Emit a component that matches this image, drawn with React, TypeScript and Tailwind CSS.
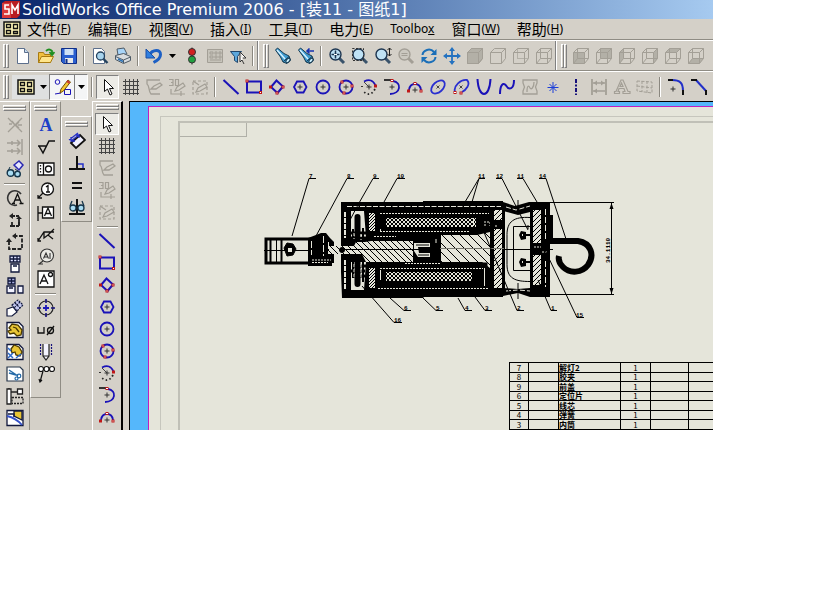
import React from 'react';
import clsx from 'clsx';

const BLUE = '#1a12b8';
const RED = '#c01818';
const GRAY = '#a39f96';
const INK = '#111111';
const PAPER = '#e5e5da';

interface IconProps {
  children: React.ReactNode;
  stroke?: string;
  width?: number;
}

const Icon: React.FC<IconProps> = ({ children, stroke = INK, width = 1 }) => (
  <svg
    viewBox="0 0 18 18"
    className="h-[18px] w-[18px] shrink-0"
    fill="none"
    stroke={stroke}
    strokeWidth={width}
    aria-hidden="true"
  >
    {children}
  </svg>
);

// little red handles used by the sketch tools
const Dots: React.FC<{ at: number[][] }> = ({ at }) => (
  <>
    {at.map(([x, y]) => (
      <rect key={`${x}-${y}`} x={x - 1} y={y - 1} width="2" height="2" fill="#fff" stroke={RED} strokeWidth="1" />
    ))}
  </>
);

const Plus: React.FC<{ x?: number; y?: number }> = ({ x = 9, y = 9 }) => (
  <path d={`M${x - 2.5} ${y}h5M${x} ${y - 2.5}v5`} stroke="#333" strokeWidth="1" />
);

const Cube: React.FC<{ face?: string; inner?: boolean; solid?: boolean }> = ({ face, inner, solid }) => (
  <Icon stroke={GRAY}>
    {solid && <path d="M1.500 5.500l4-4h11v10l-4 5h-11z" fill="#b3b0a7" />}
    {face && <path d={face} fill="#b3b0a7" stroke="none" />}
    <path d="M1.500 5.500h11v11h-11zM1.500 5.500l4-4h11v10l-4 5M12.500 5.500l4-4" />
    {inner && <path d="M5.500 1.500v10h11M5.500 11.500l-4 5" />}
  </Icon>
);

const Lens: React.FC<{ gray?: boolean; children?: React.ReactNode }> = ({ gray, children }) => (
  <Icon stroke={gray ? GRAY : '#1d3550'}>
    <path d="M11 11l5 5" strokeWidth="3" stroke={gray ? GRAY : '#39536b'} />
    <circle cx="7.500" cy="7.500" r="5.500" fill={gray ? '#cbc8c0' : '#bfe2f5'} strokeWidth="1.400" />
    {children}
  </Icon>
);

const Flashlight: React.FC<{ arrow?: boolean }> = ({ arrow }) => (
  <Icon stroke="#16384f">
    <path d="M1.500 3l2-2 6.500 5.500 5 2.500 1.500 4-3.500 3.500-4-1.500-2.500-5z" fill="#3f9bd0" />
    <path d="M3 3l8 9" stroke="#d8f2ff" strokeWidth="1.500" />
    <path d="M9.500 14.500l5.500-5" />
    <ellipse cx="14" cy="13.500" rx="1.500" ry="2.500" transform="rotate(45 14 13.500)" fill="#c9efff" />
    {arrow && <path d="M17 4H10M12.500 1.500L10 4l2.500 2.500" stroke="#1530b0" strokeWidth="1.600" />}
  </Icon>
);

const glyphs: Record<string, React.ReactNode> = {
  newFile: (
    <Icon stroke="#5c6f8c">
      <path d="M3.500 1.500h7l4 4v11h-11z" fill="#fff" />
      <path d="M10.500 1.500v4h4" fill="#c7dcf0" />
    </Icon>
  ),
  open: (
    <Icon stroke="#a87a10">
      <path d="M1.500 15.500v-10h5l1 2h6v8z" fill="#f0c040" />
      <path d="M1.500 15.500l3-6h12l-3 6z" fill="#ffe58a" />
      <path d="M9 4q3-3 6 0v3M12.500 5l2.500 3 2.500-3" stroke="#1f8f20" strokeWidth="1.800" />
    </Icon>
  ),
  save: (
    <Icon stroke="#102f88">
      <path d="M1.500 1.500h15v15h-13l-2-2z" fill="#2a5fd0" />
      <path d="M4.500 2h9v6h-9z" fill="#cfe0f5" stroke="none" />
      <path d="M5 11h8v5H5z" fill="#e8e8e8" stroke="none" />
      <path d="M6.500 12v4" strokeWidth="2" />
    </Icon>
  ),
  preview: (
    <Icon stroke="#5c6f8c">
      <path d="M2.500 1.500h8l3 3v12h-11z" fill="#fff" />
      <circle cx="9.500" cy="9" r="4" fill="#a8d4ee" stroke="#24425e" strokeWidth="1.300" />
      <path d="M12.500 12l4 4" stroke="#24425e" strokeWidth="2.400" />
    </Icon>
  ),
  print: (
    <Icon stroke="#4d5a66">
      <path d="M4 8L3 2l7-1 3 6z" fill="#a8d4f8" />
      <path d="M1.500 8.500l8-2 7 3v4l-7 3-8-4z" fill="#d8dcdf" />
      <path d="M1.500 9.500l8 3.500 7-3M9.500 13v3" />
      <path d="M4 12l5 2.500" stroke="#2b73b8" strokeWidth="1.500" />
    </Icon>
  ),
  undo: (
    <Icon stroke="#1c5fc4" width={3}>
      <path d="M4 8C8 2 15.500 2 15.500 7.500c0 4-4 6.500-7 8" />
      <path d="M1 2v9h9z" fill="#2f7fe0" stroke="#1c4fa4" strokeWidth="1" />
    </Icon>
  ),
  traffic: (
    <Icon stroke="#333">
      <path d="M9 .5v17" />
      <circle cx="9" cy="5" r="3.500" fill="#d32020" />
      <circle cx="9" cy="12.500" r="3.500" fill="#22a040" />
    </Icon>
  ),
  options: (
    <Icon stroke={GRAY}>
      <path d="M1.500 2.500h15v13h-15z" fill="#c6c3ba" />
      <path d="M4 5h3v2H4zM9 5h2v2H9zM4 9h3v2H4zM9 9h2v2H9zM13 5h2v2h-2zM13 9h2v2h-2zM4 13h11" />
    </Icon>
  ),
  filter: (
    <Icon stroke="#20456b">
      <path d="M1.500 4.500h11l-4 5v6l-3-2v-4z" fill="#5ca8dc" />
      <path d="M11 5v10l2-2 2 4M11 5l6 6h-3" fill="#fff" stroke="#333" />
    </Icon>
  ),
  flash: <Flashlight />,
  flashBack: <Flashlight arrow />,
  zoomFit: (
    <Lens>
      <path d="M7.500 3.500v8M3.500 7.500h8" strokeWidth="1.500" />
      <path d="M6 7.500h3" stroke="#fff" />
    </Lens>
  ),
  zoomArea: (
    <Lens>
      <path d="M1.500 1.500h11v12h-11z" strokeDasharray="2 1.500" stroke="#333" />
    </Lens>
  ),
  zoomInOut: (
    <Lens>
      <path d="M15.500 1v8M13.500 3l2-2 2 2M13.500 7l2 2 2-2" stroke="#222" />
    </Lens>
  ),
  zoomSelection: (
    <Lens gray>
      <path d="M4.500 6.500h6M4.500 8.500h6" />
    </Lens>
  ),
  rotate: (
    <Icon stroke="#1b6fb8" width={2}>
      <path d="M2.500 8C3 3 10 .5 14 5M15.500 10C15 15 8 17.500 4 13" />
      <path d="M16.500 2v6h-6zM1.500 16v-6h6z" fill="#1b6fb8" stroke="none" />
    </Icon>
  ),
  pan: (
    <Icon stroke="#2472c0" width={1.800}>
      <path d="M9 2v14M2 9h14" />
      <path d="M9 0l3 4H6zM9 18l3-4H6zM0 9l4-3v6zM18 9l-4-3v6z" fill="#2472c0" stroke="none" />
    </Icon>
  ),
  shaded: <Cube solid />,
  edges: <Cube />,
  hidden: <Cube face="M5 2h1v10H5zM5 11h11v1H5z" />,
  wireframe: <Cube inner />,
  front: <Cube inner face="M1.500 5.500h11v11h-11z" />,
  back: <Cube inner face="M5.500 1.500h11v10h-11z" />,
  left: <Cube inner face="M1.500 5.500l4-4v10l-4 5z" />,
  right: <Cube inner face="M12.500 5.500l4-4v10l-4 5z" />,
  top: <Cube inner face="M1.500 5.500l4-4h11l-4 4z" />,
  bottom: <Cube inner face="M1.500 16.500l4-5h11l-4 5z" />,
  views: (
    <Icon>
      <path d="M1 2h16v14H1z" fill="#fff6b8" strokeWidth="1.500" />
      <path d="M3.500 4.500h4v3h-4zM10.500 4.500h4v4h-4zM3.500 10.500h4v3h-4zM10.500 11.500h4v2h-4z" strokeWidth="1.300" />
    </Icon>
  ),
  sketch: (
    <Icon stroke={BLUE}>
      <circle cx="3.500" cy="4" r="2.300" />
      <path d="M10.500 11.500h6v5h-6zM1 16l6-1" />
      <path d="M6 15l1-4 7-9 2.500 2-7 9z" fill="#f3c530" stroke="#74500a" />
      <path d="M13 3l2.500 2" stroke="#cc3030" strokeWidth="2" />
    </Icon>
  ),
  select: (
    <Icon>
      <path d="M5.500 1.500v12l3-2.500 2.500 6 2-1-2.500-5.500h4z" fill="#fff" />
    </Icon>
  ),
  grid: (
    <Icon stroke="#444">
      <path d="M3.500 1v16M7.500 1v16M11.500 1v16M15.500 1v16M1 3.500h16M1 7.500h16M1 11.500h16M1 15.500h16" />
    </Icon>
  ),
  sketchOff: (
    <Icon stroke={GRAY} width={1.300}>
      <path d="M15 2H2v4c3 2 1 7 4 10h9" />
      <path d="M6 11l3-3 6-3 2 2-6 4z" />
    </Icon>
  ),
  sketch3d: (
    <Icon stroke={GRAY} width={1.200}>
      <path d="M1 1.500h4v3H3h2v3H1M7.500 1.500h3v6h-3zM3 11v5h14M13 13v5" />
      <path d="M7 13l2-4 6-4 2 3-6 4z" />
    </Icon>
  ),
  sketchDash: (
    <Icon stroke={GRAY} width={1.200}>
      <path d="M2 3h14v13H2z" strokeDasharray="3 2" />
      <path d="M2 3l6 4M5 14l2-4 7-4 2 3-7 4z" />
    </Icon>
  ),
  line: (
    <Icon stroke={BLUE} width={2}>
      <path d="M1.500 2L16.500 16" />
    </Icon>
  ),
  rect: (
    <Icon stroke={BLUE} width={2}>
      <path d="M2 3.500h14v11H2z" />
      <Dots at={[[2, 3], [15.500, 14.500]]} />
    </Icon>
  ),
  diamond: (
    <Icon stroke={BLUE} width={2}>
      <path d="M8.500 2.500l6.500 6-5.500 6.500-6.500-6z" />
      <Dots at={[[2.500, 9], [9, 15], [15, 9]]} />
    </Icon>
  ),
  hexagon: (
    <Icon stroke={BLUE} width={1.800}>
      <path d="M6 3.500h6.500l3 5.500-3 5.500H6L3 9z" />
      <Plus />
    </Icon>
  ),
  circle: (
    <Icon stroke={BLUE} width={1.800}>
      <circle cx="9" cy="9" r="6.500" />
      <Plus />
    </Icon>
  ),
  circle3: (
    <Icon stroke={BLUE} width={1.800}>
      <circle cx="9" cy="9" r="6.500" />
      <Plus />
      <Dots at={[[5, 4], [15, 8], [7, 15]]} />
    </Icon>
  ),
  arcCenter: (
    <Icon stroke={BLUE} width={1.800}>
      <path d="M4 3.500q8-4 11.500 4" />
      <path d="M15 11q-5 9-12 2M2 9v-1" stroke="#222" strokeDasharray="1.500 2.500" />
      <path d="M4 4l5 5" stroke="#444" strokeWidth="1" />
      <Plus />
      <Dots at={[[15.500, 8]]} />
    </Icon>
  ),
  arcTangent: (
    <Icon stroke={BLUE} width={1.800}>
      <path d="M8 3h2c9 1 8 13-3 13" />
      <path d="M1 2h8" stroke="#222" />
      <Plus />
      <Dots at={[[9, 2.500]]} />
    </Icon>
  ),
  arc3: (
    <Icon stroke={BLUE} width={1.800}>
      <path d="M3 12C4 4 14 4 15 12" />
      <Plus y={12} />
      <Dots at={[[2.500, 13], [15, 13], [9, 5.500]]} />
    </Icon>
  ),
  ellipse: (
    <Icon stroke="#2a2fd0" width={1.800}>
      <ellipse cx="9" cy="9" rx="8" ry="5" transform="rotate(-42 9 9)" />
      <path d="M7.500 7.500l3 3M10.500 7.500l-3 3" stroke="#444" strokeWidth="1" />
    </Icon>
  ),
  ellipsePart: (
    <Icon stroke="#2a2fd0" width={1.800}>
      <path d="M3 14C1 8 9 1 15 2c4 4-1 10-5 12" />
      <path d="M7.500 7.500l3 3M10.500 7.500l-3 3" stroke="#444" strokeWidth="1" />
      <Dots at={[[3, 14.500], [9, 15]]} />
    </Icon>
  ),
  parabola: (
    <Icon stroke={BLUE} width={2}>
      <path d="M2.500 1c1 20 12 20 13 0" />
    </Icon>
  ),
  spline: (
    <Icon stroke={BLUE} width={2}>
      <path d="M2 16C2 7 5 4 8 7.500c3 5 8 4 8-5.500" />
    </Icon>
  ),
  splineOff: (
    <Icon stroke={GRAY} width={1.300}>
      <path d="M2 2h14v3l-1.500 4 1.500 4v3H2v-3l1.500-4L2 5z" />
      <path d="M6 14c0-8 2-6 3-4s4 0 4-6" />
    </Icon>
  ),
  point: (
    <Icon stroke="#1c3fd8" width={1}>
      <path d="M9 4v11M3.500 9.500h11M5.500 6l7 7M12.500 6l-7 7" />
    </Icon>
  ),
  centerline: (
    <Icon stroke="#16107a" width={2}>
      <path d="M9 1v16" strokeDasharray="4 1.500 2 1.500" />
    </Icon>
  ),
  mirror: (
    <Icon stroke={GRAY} width={1.300}>
      <path d="M2 1v16M16 1v16" strokeWidth="1.800" />
      <path d="M3 5h12M3 13h12" />
      <path d="M7 2.500L3.500 5 7 7.500zM7 10.500L3.500 13 7 15.500zM11 2.500L14.500 5 11 7.500z" fill={GRAY} stroke="none" />
    </Icon>
  ),
  textOff: (
    <Icon stroke={GRAY} width={1.200}>
      <path d="M1.500 15.500h5v-2H5l1-3h5l1 3h-2v2h7v-2h-2L10 2H8L3 13.500H1.500zM7 8.500L8.500 5 10 8.500z" />
    </Icon>
  ),
  planeOff: (
    <Icon stroke={GRAY}>
      <path d="M1 3l15 1v11L1 13zM6 3v11M11 3v12M1 8l15 2" strokeDasharray="3 1.500" />
    </Icon>
  ),
  fillet: (
    <Icon stroke="#2230c8" width={2}>
      <path d="M5 2c8 0 11 3 11 11" />
      <path d="M1 2h5M16 12v5" stroke="#111" />
      <Plus x={6} y={11} />
    </Icon>
  ),
  chamfer: (
    <Icon stroke="#2230c8" width={2}>
      <path d="M6 2l10 11" />
      <path d="M1 2h6M16 12v5" stroke="#111" />
    </Icon>
  ),
  // left palettes
  trimCross: (
    <Icon stroke={GRAY} width={1.300}>
      <path d="M2 2l14 14M16 2L2 16M3 8h3M12 9h4M6 5l3 4-3 3M13 6l-3 3 3 3" />
    </Icon>
  ),
  alignOff: (
    <Icon stroke={GRAY} width={1.500}>
      <path d="M16 1v16M1 5h13M1 13h13M11 2l3 3-3 3M11 10l3 3-3 3M6 3v4M6 11v4" />
    </Icon>
  ),
  dimGlasses: (
    <Icon stroke="#15354a">
      <path d="M8 5l5-4 4 4-4 5z" fill="#e7e7ff" stroke="#2a28b0" strokeWidth="1.500" />
      <circle cx="4.500" cy="13" r="3.300" fill="#a9dcf2" strokeWidth="1.400" />
      <circle cx="11.500" cy="14" r="2.800" fill="#a9dcf2" strokeWidth="1.400" />
      <path d="M2 11l2-4M9 9l3 2" />
    </Icon>
  ),
  circledA: (
    <Icon stroke="#333" width={1.600}>
      <path d="M11 16A7.300 7.300 0 1 1 15 5" />
      <path d="M7.500 14.500L11.500 5l4 9.500M9 11h5M6 14.500h3M13.500 14.500h4" stroke="#111" strokeWidth="1.300" />
    </Icon>
  ),
  jogUp: (
    <Icon stroke="#222" width={1.800}>
      <path d="M6 15h7v-4M6 5h7" strokeDasharray="3 1" />
      <path d="M13 7v8M6 11v4h-2" />
      <path d="M7 2v6L3 5zM13 5l3 3h-6z" fill="#222" stroke="none" />
    </Icon>
  ),
  jogDash: (
    <Icon stroke="#222" width={1.800}>
      <path d="M3 8v8h13V3H9" strokeDasharray="4 1.500" />
      <path d="M3 5l3 4H0zM6 3l4-3v6z" fill="#222" stroke="none" />
    </Icon>
  ),
  tableCol: (
    <Icon stroke="#11183c" width={1.300}>
      <path d="M4 1h10v6H4zM4 4h10M7.500 1v6M11 1v6" fill="#dfe3ff" />
      <path d="M5 9h8v8H5zM7 11h4" fill="#fff" />
    </Icon>
  ),
  tableRow: (
    <Icon stroke="#11183c" width={1.300}>
      <path d="M2 1h7v6H2zM2 4h7M5.500 1v6" fill="#aab0e0" />
      <path d="M1 9h8v7H1zM12 9h5v7h-5zM3 11h4" fill="#f2f3ff" />
    </Icon>
  ),
  tableTilt: (
    <Icon stroke="#11183c" width={1.200}>
      <path d="M6 6l6-5 5 5-6 6z" fill="#c3c8f0" strokeDasharray="2 1" />
      <path d="M1 10l6-2 4 5-5 4H1z" fill="#fff" />
      <path d="M9 4l5 5M14 3l-5 5" strokeDasharray="2 1" />
    </Icon>
  ),
  blockYellow: (
    <Icon stroke="#11183c" width={1.300}>
      <path d="M1 1.500h12l4 4v11H1z" fill="#fff" />
      <path d="M3 7l3-4 6 1 4 5-1 5-4 1-3-3-4 1-2-3 3-1z" fill="#e8c535" stroke="#4a3900" />
      <path d="M7 6l3 1 3 4" stroke="#4a3900" />
    </Icon>
  ),
  blockYellowGear: (
    <Icon stroke="#11183c" width={1.300}>
      <path d="M1 1.500h12l4 4v11H1z" fill="#fff" />
      <path d="M5 6l3-4 5 2 3 5-2 4-4-1-1-3-3 1z" fill="#e8c535" stroke="#4a3900" />
      <path d="M2 10l5 5M7 10l-5 5M10 15l5-4M2 5l3 3" stroke="#2b69c8" strokeWidth="1.500" />
    </Icon>
  ),
  blockCut: (
    <Icon stroke="#26364a" width={1.200}>
      <path d="M1 2h13l3 3v11H1z" fill="#fff" />
      <path d="M3 5l9 6M3 8l7 2" stroke="#246aa8" strokeWidth="1.500" />
      <circle cx="13" cy="11" r="1.800" stroke="#246aa8" />
      <circle cx="10.500" cy="13.500" r="1.500" stroke="#246aa8" />
    </Icon>
  ),
  alignBlocks: (
    <Icon stroke="#222" width={1.300}>
      <path d="M5 5h7M3 1v16" />
      <path d="M1 2h4v15H1zM11.500 2h5v5h-5z" fill="#fff" />
      <path d="M6 10.500h11v6H6z" strokeDasharray="2 1" />
    </Icon>
  ),
  blockFlag: (
    <Icon stroke="#11183c" width={1.300}>
      <path d="M1 1.500h16v15H1z" fill="#fff" />
      <path d="M8 2h8v9l-8-4z" fill="#e8c535" />
      <path d="M1 7q9 2 15 9" stroke="#3350c8" strokeWidth="1.800" />
      <path d="M2 5h6v3" />
    </Icon>
  ),
  note: (
    <Icon stroke="none">
      <text x="9" y="15" textAnchor="middle" fontSize="18" fontWeight="700" fill="#1c3fc8" fontFamily='"Liberation Serif", serif'>
        A
      </text>
    </Icon>
  ),
  finish: (
    <Icon width={1.500}>
      <path d="M1 8h9M2 8l4 7L12 3h6" />
    </Icon>
  ),
  tolerance: (
    <Icon width={1.300}>
      <path d="M1 3h16v12H1zM6.500 3v12" fill="#fff" />
      <circle cx="11.500" cy="9" r="3" />
      <path d="M3.500 5v8" strokeDasharray="1.500 1.500" />
    </Icon>
  ),
  balloon: (
    <Icon width={1.300}>
      <circle cx="10.500" cy="7" r="6" fill="#fff" />
      <path d="M6 11l-5 5M1 13v3h4M9 5l2-1.500V10M9 10h4" />
    </Icon>
  ),
  datum: (
    <Icon width={1.300}>
      <path d="M1 2v15M1 9h4M5.500 3h11v11h-11z" fill="#fff" />
      <path d="M7.500 12l3.500-8 3.500 8M9 9.500h4" />
    </Icon>
  ),
  weld: (
    <Icon width={1.300}>
      <path d="M1 15l6-9h10M7 6v6l4-3 5 4M11 9l6-6M1 12v3h3" />
    </Icon>
  ),
  balloonAuto: (
    <Icon stroke="#333" width={1.100}>
      <circle cx="10" cy="7.500" r="6.500" fill="#e9e9e4" />
      <path d="M6 13l-4 3h4M6.500 10.500L9 5l2.500 5.500M7.500 9h3M13 5v6" />
    </Icon>
  ),
  annotBox: (
    <Icon width={1.300}>
      <path d="M1 1h16v16H1z" fill="#fff" />
      <path d="M3 14l4-9 4 9M4.500 11h5" />
      <circle cx="13.500" cy="4.500" r="2" />
    </Icon>
  ),
  centerMark: (
    <Icon stroke="#222" width={1.200}>
      <circle cx="9" cy="9" r="7" />
      <path d="M9 0v4M9 14v4M0 9h4M14 9h4" strokeWidth="1.600" stroke="#15107a" />
      <path d="M6 9h6M9 6v6" stroke="#1c18b8" strokeWidth="1.800" />
    </Icon>
  ),
  holeCallout: (
    <Icon width={1.300}>
      <path d="M1 6v6h6V6M10 14l7-9" />
      <circle cx="13.500" cy="9.500" r="3" />
    </Icon>
  ),
  cosmetic: (
    <Icon stroke="#222" width={1.200}>
      <path d="M6 1v12l3 4 3-4V1M6 13h6" fill="#f4f4ff" />
      <path d="M3.500 1v11M14.500 1v11" stroke="#15107a" strokeDasharray="2 1" />
    </Icon>
  ),
  stacked: (
    <Icon width={1.200}>
      <circle cx="4" cy="4" r="2.500" fill="#fff" />
      <circle cx="9.500" cy="4" r="2.500" fill="#fff" />
      <circle cx="15" cy="4" r="2.500" fill="#fff" />
      <path d="M6 6L3 17M2 14l1 3 2-2" />
    </Icon>
  ),
  smartDim: (
    <Icon stroke="#111" width={1.800}>
      <path d="M3 11l9-8 5 5-9 8z" fill="#f1f1ff" />
      <path d="M1 8l9-7M3 9l8-6M3 5v4h4M8 3h3v3" stroke="#2530c8" strokeWidth="1.300" />
    </Icon>
  ),
  perpendicular: (
    <Icon width={2}>
      <path d="M1 15h16M9 2v13" />
      <path d="M10 10h5v4" stroke="#2530c8" strokeWidth="1.500" />
    </Icon>
  ),
  equal: (
    <Icon width={2}>
      <path d="M4 7h10M4 12h10" />
    </Icon>
  ),
  showRelations: (
    <Icon stroke="#15354a" width={1.300}>
      <path d="M9 1v15M1 16h16" stroke="#111" strokeWidth="2" />
      <circle cx="5" cy="10" r="3" fill="#a9dcf2" />
      <circle cx="13" cy="10" r="3" fill="#a9dcf2" />
      <path d="M2 8l2-5M16 8l-2-5" />
    </Icon>
  ),
};

interface ToolProps {
  name: string;
  vertical?: boolean;
  pressed?: boolean;
}

const Tool: React.FC<ToolProps> = ({ name, vertical, pressed }) => (
  <button
    type="button"
    aria-label={name}
    className={clsx(
      'flex shrink-0 items-center justify-center',
      vertical ? 'h-[22px] w-6' : 'h-6 w-[23px]',
      pressed && 'border border-t-[#808080] border-l-[#808080] border-r-white border-b-white bg-[#ecebe6]'
    )}
  >
    {glyphs[name]}
  </button>
);

const Arrow: React.FC<{ label: string; className?: string }> = ({ label, className = 'w-3' }) => (
  <button type="button" aria-label={label} className={clsx('flex h-6 shrink-0 items-center justify-center', className)}>
    <svg viewBox="0 0 7 4" className="h-1 w-[7px]" aria-hidden="true">
      <path d="M0 0h7L3.500 4z" fill="#000" />
    </svg>
  </button>
);

const Divider = () => (
  <div className="flex w-2 shrink-0 justify-center">
    <div className="h-5 w-[2px] border-l border-[#8a877f] bg-white" />
  </div>
);

const Grip = () => (
  <div className="flex h-6 w-[6px] shrink-0">
    <div className="w-[3px] border border-t-white border-r-[#808080] border-b-[#808080] border-l-white" />
    <div className="w-[3px] border border-t-white border-r-[#808080] border-b-[#808080] border-l-white" />
  </div>
);

const PaletteGrip = () => (
  <div className="mb-[3px] flex h-[6px] w-[23px] shrink-0 flex-col">
    <div className="h-[3px] border border-t-white border-r-[#808080] border-b-[#808080] border-l-white" />
    <div className="h-[3px] border border-t-white border-r-[#808080] border-b-[#808080] border-l-white" />
  </div>
);

// '|' is a divider
const Tools: React.FC<{ items: string[] }> = ({ items }) => (
  <>
    {items.map((name, i) => (name === '|' ? <Divider key={i} /> : <Tool key={i} name={name} />))}
  </>
);

const Palette: React.FC<{ items: string[]; className?: string; active?: string }> = ({ items, className, active }) => (
  <div className={clsx('flex shrink-0 flex-col items-center', className)}>
    <PaletteGrip />
    {items.map((name, i) =>
      name === '|' ? (
        <div key={i} className="flex h-[7px] items-center">
          <div className="h-[2px] w-[21px] border-t border-[#8a877f] bg-white" />
        </div>
      ) : (
        <Tool key={i} name={name} vertical pressed={name === active} />
      )
    )}
  </div>
);

const menus = [
  ['文件', 'F'],
  ['编辑', 'E'],
  ['视图', 'V'],
  ['插入', 'I'],
  ['工具', 'T'],
  ['电力', 'E'],
  ['Toolbox', ''],
  ['窗口', 'W'],
  ['帮助', 'H'],
];

const sketchTools = ['line', 'rect', 'diamond', 'hexagon', 'circle', 'circle3', 'arcCenter', 'arcTangent', 'arc3'];

const parts = [
  ['7', '解灯2'],
  ['8', '胶夹'],
  ['9', '前盖'],
  ['6', '定位片'],
  ['5', '线芯'],
  ['4', '弹簧'],
  ['3', '内筒'],
];

// label, text x, text y, leader path
const callouts: [string, number, number, string][] = [
  ['7', 309, 178, 'M316 178.500H309L292 236'],
  ['8', 347, 178, 'M354 178.500H347L316 236'],
  ['9', 373, 178, 'M379 178.500H373L359 203L350 220'],
  ['10', 397, 178, 'M405 178.500H397L384 202'],
  ['11', 478, 178, 'M485 178.500H479L465 202M479 178.500L472 202'],
  ['12', 496, 178, 'M496 178.500H502L528 230'],
  ['11', 517, 178, 'M517 178.500H523L537 202'],
  ['14', 539, 178, 'M539 178.500H546L566 239'],
  ['16', 394, 322, 'M402 322.500H394L362 286'],
  ['6', 404, 310, 'M411 310.500H404L390 298'],
  ['5', 436, 310, 'M443 310.500H436L423 298'],
  ['4', 465, 310, 'M472 310.500H465L458 298'],
  ['3', 485, 310, 'M492 310.500H485L475 297'],
  ['2', 517, 310, 'M524 310.500H517L483 230'],
  ['1', 551, 310, 'M557 310.500H551L538 280'],
  ['15', 576, 317, 'M584 317.500H577L545 250'],
];

// hatch tiles, one diagonal per tile
const Hatch: React.FC<{ id: string; size: number; d: string }> = ({ id, size, d }) => (
  <pattern id={id} width={size} height={size} patternUnits="userSpaceOnUse">
    <rect width={size} height={size} fill={PAPER} stroke="none" />
    <path d={d} stroke="#000" strokeWidth="1" strokeLinecap="square" />
  </pattern>
);

const Assembly = () => (
  <svg viewBox="260 137 360 225" className="ml-20 h-[225px] w-[360px] shrink-0" fill="none" stroke="#000" role="img" aria-label="装11">
    <defs>
      <Hatch id="mesh" size={4} d="M0 0l4 4M4 0L0 4" />
      <Hatch id="fine" size={3} d="M0 3l3-3" />
      <Hatch id="down" size={6} d="M0 0l6 6" />
      <Hatch id="wide" size={9} d="M0 0l9 9" />
      <Hatch id="up" size={5} d="M0 5l5-5" />
    </defs>

    {/* housing */}
    <path d="M341 202h82v-1h80v96h-79l-1 1h-81l-1-26z" fill="#000" stroke="none" />
    <path d="M347 206.500h154" stroke={PAPER} strokeDasharray="5 1.500" />
    <path d="M345 212v26M345 260v30" stroke={PAPER} strokeWidth="2" strokeDasharray="5 1" />
    <path d="M351 211h13l2 26h-15zM351 262h15l-2 28h-13z" fill={PAPER} stroke="none" />
    <path d="M357.500 217v24M357.500 261v23" strokeWidth="6" strokeLinecap="round" />
    <path d="M351 233h16M351 238h16M352 266h14M351 271h14M353 276h12" strokeWidth="3" />
    <path d="M353 229v13M363 228v13M353 260v18M363 262v20" strokeWidth="2" />
    <path d="M354 233v6M361 234v6M354 264v14M361 264v14" stroke={PAPER} strokeDasharray="3 2" />

    {/* coils */}
    <path d="M369 213h6v18h-6zM369 268h6v20h-6z" fill="url(#fine)" stroke="none" />
    <path d="M380 213.500h109M380 231.500h90M374 236.500h22M380 268.500h103M378 288.500h110M405 263.500h36" stroke={PAPER} strokeDasharray="2 1" />
    <path d="M380.500 229v2M380.500 270v10" stroke={PAPER} />
    <path d="M386 218h90v9h-90zM386 272h86v9h-86z" fill="url(#mesh)" stroke="none" />
    <path d="M473.500 218v9M485 221v6M487 222h3v4h8" stroke={PAPER} strokeDasharray="2 1" />

    {/* shaft */}
    <path d="M328 246h26l2-4h9l6-1h57v21h-62l-4-8h-34z" fill="url(#down)" stroke="none" />
    <path d="M441 235h36l13-3v36l-8-6h-41z" fill="url(#wide)" stroke="none" />
    <path d="M413 237h28v26h-28z" fill="#000" stroke="none" />
    <path d="M414 243h16v4h-12l1 6h11v4h-12l-4-6z" fill={PAPER} stroke="none" />
    <path d="M416 245h13M418 255h11M416 249.500h14" />
    <path d="M340 249.500h80" strokeWidth="1" />
    <path d="M436 239v4" stroke={PAPER} />
    <path d="M480 264h6v22" strokeWidth="3" />
    <path d="M484.500 268v18" stroke={PAPER} />

    {/* end plate */}
    <path d="M490 208h4v82h-4zM502 208h3v82h-3z" fill="#000" stroke="none" />
    <path d="M494 210h8v10h-8zM494 229h8v59h-8z" fill="url(#up)" stroke="none" />

    {/* neck */}
    <path d="M503 202l12 4 14-4h21v10h-20l-12 3-15-4zM503 288l15 1 12-1h20v9h-20l-12-4-15 3z" fill="#000" stroke="none" />
    <path d="M506 207l10 3 14-4h12M506 291l12-1 12 1h10" stroke={PAPER} strokeDasharray="5 2" />
    <path d="M530 217.500c-16-1-23 4-23 17v30c0 14 8 17 23 17M530 226.500h-16.500v44H530M505 249.500h48" />
    <path d="M518 200v14M518 283v16M528 225v4" />
    <g fill="#000" stroke="none">
      <path d="M519 235l2-4 5 1v2h4v2h-4v3l-5 1zM519 262l2-4 5 1v2h4v2h-4v3l-5 1z" />
      <path d="M530 204h20v92h-20z" />
      <path d="M549 215h4v26h-4z" />
    </g>
    <path d="M522.500 234v2M522.500 261v2" stroke={PAPER} />
    <path d="M533 210h8v33h-8zM533 255h8v30h-8z" fill="url(#up)" stroke="none" />
    <path d="M545.500 209v30M545.500 261v26" stroke={PAPER} strokeDasharray="6 2" />
    <path d="M534 247h7M542 252h6" stroke={PAPER} strokeDasharray="2 1" />
    <path d="M440 248.500h64" stroke="#77776f" />

    {/* hook */}
    <path d="M549 241h29c13 2 17 14 10 24-6 8-18 9-25 2-3-3-5-7-4-11" strokeWidth="6" />

    {/* clevis */}
    <path d="M266 239h48v24h-48z" fill={PAPER} strokeWidth="3" />
    <path d="M270.500 239v24M281.500 239v24" strokeWidth="2" />
    <path d="M276.500 240v22" />
    <path d="M264 250.500h64" />
    <path d="M284 248l3-5 6 1 3 5-3 6-6 1z" fill="#000" />
    <path d="M288 248h4v4h-4z" fill={PAPER} stroke="none" />
    <path d="M308 238l8-3 5-2h5l4 5 4 4v21h-2v3h-24z" fill="#000" stroke="none" />
    <path d="M312 260h19M312 262.500h16" stroke={PAPER} strokeDasharray="2 1" />
    <path d="M323.500 236v20M328.500 242v12M311.500 241v14" stroke={PAPER} strokeDasharray="7 2" />
    <path d="M329 246h12v8h-12z" fill="url(#down)" stroke="none" />
    <circle cx="342" cy="250" r="2.500" fill="#000" />

    {/* dimension */}
    <path d="M550 202.500h64M550 294.500h64M611.500 203v91" />
    <path d="M611.500 203l2 6h-4zM611.500 294l2-6h-4z" fill="#000" stroke="none" />
    <text transform="rotate(-90 610 263)" x="610" y="263" fontSize="6" fontWeight="700" fill="#000" stroke="none" fontFamily='"Liberation Mono", monospace'>
      34.1110
    </text>

    {callouts.map(([label, x, y, d]) => (
      <g key={d}>
        <path d={d} strokeWidth="1" />
        <text x={x} y={y} fontSize="6" fontWeight="700" fill="#000" stroke="none" fontFamily='"Liberation Mono", monospace'>
          {label}
        </text>
      </g>
    ))}
  </svg>
);

const PartsTable = () => (
  <table className="ml-[329px] w-[230px] shrink-0 table-fixed border-collapse font-['Noto_Sans_CJK_SC',sans-serif] text-[8px] leading-[8px] text-black">
    <colgroup>
      <col className="w-[19px]" />
      <col className="w-[30px]" />
      <col className="w-[62px]" />
      <col className="w-[30px]" />
      <col className="w-[38px]" />
      <col />
    </colgroup>
    <tbody>
      {parts.map(([no, name]) => (
        <tr key={no} className="h-[10px] even:h-[9px]">
          <td className="border border-black p-0 text-center">{no}</td>
          <td className="border border-black p-0" />
          <td className="border border-black p-0 font-bold whitespace-nowrap">{name}</td>
          <td className="border border-black p-0 text-center">1</td>
          <td className="border border-black p-0" />
          <td className="border border-black p-0" />
        </tr>
      ))}
    </tbody>
  </table>
);

const Sheet = () => (
  <main className="ml-[6px] flex min-w-0 flex-1 border-t border-l border-black bg-[#55b7fb] pt-1 pl-[18px]">
    {/* contained so that the sheet never stretches the workspace */}
    <div className="relative min-w-0 flex-1 overflow-hidden border-t border-l border-[#c020c0] bg-[#e5e5da]">
      <div className="absolute inset-0 flex pt-[9px] pl-[11px]">
        <div className="flex flex-1 border-t border-l border-[#c6c6bd] pt-1 pl-[17px]">
          <div className="flex w-0 flex-1 flex-col border-t-2 border-l-2 border-[#c0c0b7]">
            <div className="h-[14px] w-[67px] shrink-0 border-r border-b border-[#b0b0a8]" />
            <Assembly />
            <PartsTable />
          </div>
        </div>
      </div>
    </div>
  </main>
);

export default function App() {
  return (
    <div className="min-h-screen bg-white">
      <div className="flex w-7/8 flex-col overflow-x-clip bg-[#d4d0c8] font-['Noto_Sans','Noto_Sans_CJK_SC',sans-serif] text-black">
        <header className="flex h-[19px] items-center bg-linear-to-r from-[#0a246a] to-[#a6caf0]">
          <svg viewBox="0 0 18 18" className="ml-[2px] h-[18px] w-[18px] shrink-0" aria-hidden="true">
            <path d="M0 2l3-2h15v14l-3 3H0z" fill="#b81c22" />
            <path d="M0 2h9v15H0z" fill="#d8383a" />
            <path d="M7 4H3v4h4v5H2M10 13V4l3 5 3-5v9" fill="none" stroke="#fff" strokeWidth="1.600" />
          </svg>
          <h1 className="ml-[2px] font-['DejaVu_Sans','Noto_Sans_CJK_SC',sans-serif] text-[16px] leading-[18px] whitespace-nowrap text-white">
            SolidWorks Office Premium 2006 - [装11 - 图纸1]
          </h1>
        </header>

        <nav className="flex h-[21px] items-center gap-[17px] border-b border-[#8f8c84] pl-[3px] text-[12px] leading-[18px]">
          <button type="button" aria-label="window menu" className="-mr-[11px] shrink-0">
            {glyphs.views}
          </button>
          {menus.map(([label, key]) => (
            <button key={label} type="button" className="flex shrink-0 items-center whitespace-nowrap">
              {key ? (
                <>
                  <span className="text-[15px]">{label}</span>
                  <span>
                    (<span className="underline">{key}</span>)
                  </span>
                </>
              ) : (
                <span>
                  Toolbo<span className="underline">x</span>
                </span>
              )}
            </button>
          ))}
        </nav>

        <div role="toolbar" aria-label="standard" className="flex h-[31px] items-center border-t border-b border-t-white border-b-[#8f8c84] pl-[3px]">
          <Grip />
          <div className="ml-[2px] flex items-center">
            <Tools items={['newFile', 'open', 'save', '|', 'preview', 'print', '|', 'undo']} />
            <Arrow label="undo list" className="w-[15px]" />
            <Tools items={['traffic', 'options', 'filter', '|']} />
          </div>
          <div className="mr-1 h-full w-[2px] shrink-0 border-r border-l border-l-[#808080] border-r-white" />
          <Grip />
          <div className="ml-[2px] flex items-center">
            <Tools
              items={[
                'flash', 'flashBack', '|', 'zoomFit', 'zoomArea', 'zoomInOut', 'zoomSelection', 'rotate', 'pan',
                'shaded', 'edges', 'hidden', 'wireframe',
              ]}
            />
          </div>
          <div className="mr-1 h-full w-[2px] shrink-0 border-r border-l border-l-[#808080] border-r-white" />
          <Grip />
          <div className="ml-[2px] flex items-center">
            <Tools items={['front', 'back', 'left', 'right', 'top', 'bottom']} />
          </div>
        </div>

        <div role="toolbar" aria-label="sketch" className="flex h-[30px] items-center border-t border-t-white pl-[3px]">
          <Grip />
          <div className="ml-[3px] flex bg-[#dfe0e0] pl-[2px]">
            <Tool name="views" />
            <Arrow label="view list" />
          </div>
          <div className="flex border border-[#808080] border-r-white border-b-white bg-[#f4f5f6] pl-px">
            <Tool name="sketch" />
            <div className="w-px bg-[#808080]" />
            <Arrow label="sketch list" />
          </div>
          <Tools items={['|']} />
          <Tool name="select" pressed />
          <Tools items={['grid', 'sketchOff', 'sketch3d', 'sketchDash', '|']} />
          <Tools
            items={[
              ...sketchTools,
              'ellipse', 'ellipsePart', 'parabola', 'spline', 'splineOff', 'point', 'centerline', 'mirror', 'textOff',
              'planeOff', '|', 'fillet', 'chamfer',
            ]}
          />
        </div>

        <div className="flex">
          <Palette
            className="w-[30px] border-t border-r border-t-white border-r-[#8f8c84] pt-[3px] pb-px"
            items={[
              'trimCross', 'alignOff', 'dimGlasses', '|', 'circledA', 'jogUp', 'jogDash', 'tableCol', 'tableRow',
              'tableTilt', 'blockYellow', 'blockYellowGear', 'blockCut', 'alignBlocks', 'blockFlag',
            ]}
          />
          <Palette
            className="w-[31px] self-start border border-t-white border-r-[#8f8c84] border-b-[#8f8c84] border-l-white pt-[3px] pb-3"
            items={[
              'note', 'finish', 'tolerance', 'balloon', 'datum', 'weld', 'balloonAuto', 'annotBox', '|', 'centerMark',
              'holeCallout', 'cosmetic', 'stacked',
            ]}
          />
          <Palette
            className="mt-[15px] w-[31px] self-start border border-t-white border-r-[#8f8c84] border-b-[#8f8c84] border-l-white pt-1 pb-[3px]"
            items={['smartDim', 'perpendicular', 'equal', 'showRelations']}
          />
          <Palette
            className="w-[31px] border-t border-r-2 border-l border-t-white border-r-black border-l-white pt-[2px]"
            active="select"
            items={['select', 'grid', 'sketchOff', 'sketch3d', 'sketchDash', '|', ...sketchTools]}
          />
          <Sheet />
        </div>
      </div>
    </div>
  );
}
